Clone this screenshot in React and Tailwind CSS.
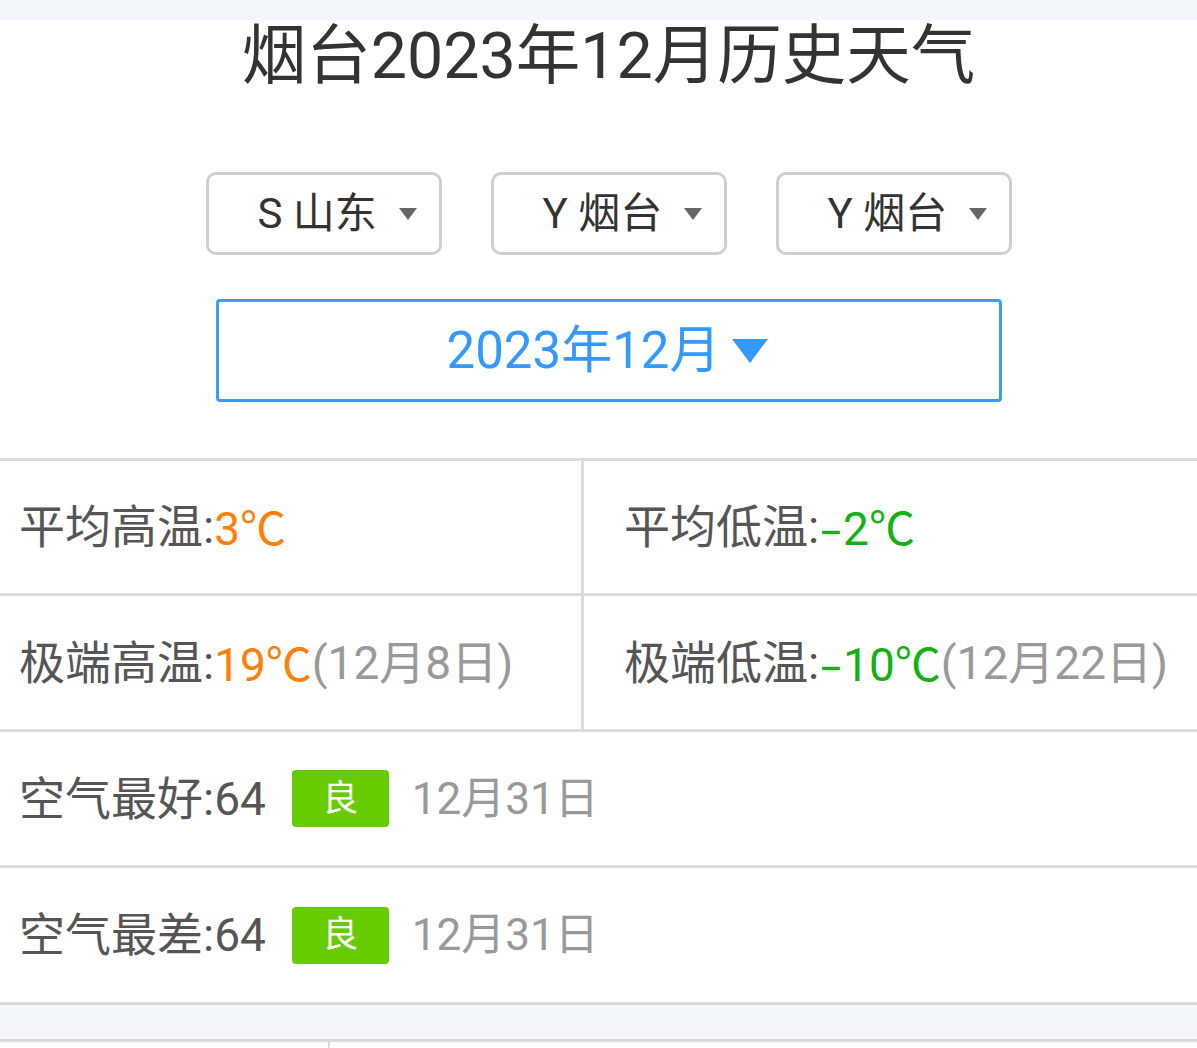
import React from 'react';

const font = { fontFamily: 'Roboto, "Noto Sans CJK SC", sans-serif' };
const cjk = { fontFamily: '"Noto Sans CJK SC", sans-serif' };

const Caret = ({ className = '' }) => (
  <svg viewBox="0 0 18 12" className={className}>
    <path d="M0 0h18L9 12z" fill="currentColor" />
  </svg>
);

const Select = ({ text }) => (
  <div className="flex h-[83px] w-[236px] items-center rounded-[10px] border-[3px] border-[#cfcfcf] bg-white pl-[49px]">
    <span className="text-[42px] leading-none text-[#333]">{text}</span>
    <Caret className="ml-[22px] h-[12px] w-[18px] text-[#666]" />
  </div>
);

const Cell = ({ children, className = '' }) => (
  <div className={`flex items-center text-[46px] leading-none text-[#555] ${className}`}>
    {children}
  </div>
);

const Temp = ({ value, color }) => {
  const neg = value < 0;
  return (
    <span className={color}>
      {neg && (
        <span className="mx-[4px] inline-block scale-x-150" style={cjk}>
          -
        </span>
      )}
      {Math.abs(value)}
      <span style={cjk}>℃</span>
    </span>
  );
};

const Badge = () => (
  <span className="ml-[26px] flex h-[57px] w-[97px] items-center justify-center rounded-[4px] bg-[#66cc00] text-[36px] text-white">
    良
  </span>
);

export default function App() {
  return (
    <div className="min-h-screen bg-white" style={font}>
      <div className="h-[20px] bg-[#f3f6fa]"></div>

      <div className="flex flex-col items-center pl-[20px]">
        <h1 className="h-[72px] text-[64.5px] leading-[72px] font-normal text-[#333]">
          烟台2023年12月历史天气
        </h1>

        <div className="mt-[80px] flex gap-[49px]">
          <Select text="S 山东" />
          <Select text="Y 烟台" />
          <Select text="Y 烟台" />
        </div>

        <div className="mt-[44px] flex h-[103px] w-[786px] items-center justify-center rounded-[4px] border-[3px] border-[#3d9cf8] text-[#3399ff]">
          <span className="text-[51px] leading-none">2023年12月</span>
          <Caret className="ml-[10px] h-[24px] w-[40px]" />
        </div>
      </div>

      <div className="mt-[56px] border-t-[3px] border-[#dadada]">
        <div className="flex h-[135px] border-b-[3px] border-[#dadada]">
          <Cell className="w-[584px] border-r-[3px] border-[#dadada] pl-[19px]">
            平均高温:<Temp value={3} color="text-[#ff7f0a]" />
          </Cell>
          <Cell className="flex-1 pl-[40px]">
            平均低温:<Temp value={-2} color="text-[#14b014]" />
          </Cell>
        </div>
        <div className="flex h-[136px] border-b-[3px] border-[#dadada]">
          <Cell className="w-[584px] border-r-[3px] border-[#dadada] pl-[19px]">
            极端高温:<Temp value={19} color="text-[#ff7f0a]" />
            <span className="text-[#999]">(12月8日)</span>
          </Cell>
          <Cell className="flex-1 pl-[40px]">
            极端低温:<Temp value={-10} color="text-[#14b014]" />
            <span className="text-[#999]">(12月22日)</span>
          </Cell>
        </div>
        <div className="flex h-[136px] border-b-[3px] border-[#dadada]">
          <Cell className="pl-[19px]">
            空气最好:64
            <Badge />
            <span className="ml-[23px] text-[44px] text-[#999]">12月31日</span>
          </Cell>
        </div>
        <div className="flex h-[137px] border-b-[3px] border-[#dadada]">
          <Cell className="pl-[19px]">
            空气最差:64
            <Badge />
            <span className="ml-[23px] text-[44px] text-[#999]">12月31日</span>
          </Cell>
        </div>
        <div className="h-[37px] border-b-[3px] border-[#dadada] bg-[#f3f6fa]"></div>
        <div className="flex h-[40px]">
          <div className="w-[330px] border-r-[2px] border-[#dadada]"></div>
        </div>
      </div>
    </div>
  );
}
